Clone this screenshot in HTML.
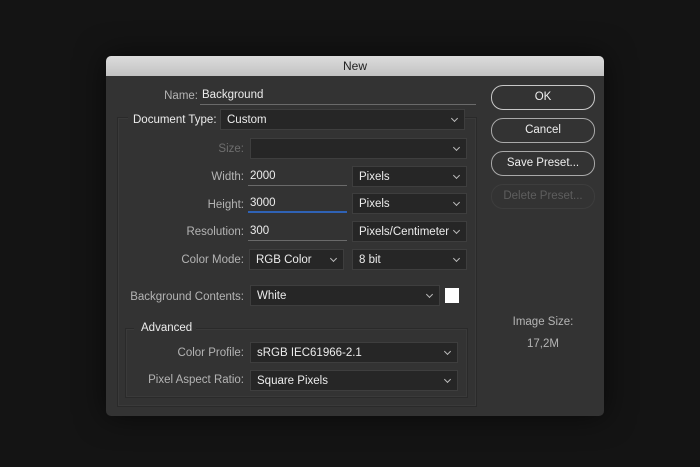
<!DOCTYPE html>
<html><head><style>
*{box-sizing:border-box;margin:0;padding:0}
body{width:700px;height:467px;background:#141414;font-family:"Liberation Sans",sans-serif;position:relative;overflow:hidden}
.dlg{position:absolute;left:106px;top:56px;width:498px;height:360px;background:#333333;border-radius:5px;overflow:hidden;box-shadow:0 0 30px rgba(0,0,0,.6)}
.tb{position:absolute;left:0;top:0;width:100%;height:20px;background:linear-gradient(#dcdcdc,#c2c2c2);color:#222;font-size:12px;text-align:center;line-height:20px}
.a{position:absolute}
.l{position:absolute;font-size:11.5px;color:#b4b4b4;text-align:right;white-space:nowrap}
.sel{position:absolute;height:21px;background:#262626;border:1px solid #3e3e3e;color:#ececec;font-size:11.5px;line-height:20px;padding-left:6px;white-space:nowrap}
.sel:after{content:"";position:absolute;right:7px;top:6px;width:4px;height:4px;border-right:1.2px solid #bbb;border-bottom:1.2px solid #bbb;transform:rotate(45deg)}
.inp{position:absolute;height:20px;border-bottom:1px solid #6a6a6a;color:#ececec;font-size:11.5px;line-height:21px;padding-left:2px}
.box{position:absolute;border:1px solid #2a2a2a;box-shadow:inset 0 0 0 1px #3a3a3a}
.btn{position:absolute;left:385px;width:104px;height:25px;border:1.5px solid #a9a9a9;border-radius:12px;color:#eee;font-size:11.5px;text-align:center;line-height:23px}
</style></head><body>
<div class="dlg">
<div class="tb">New</div>
<div class="box" style="left:11px;top:61px;width:360px;height:290px"></div>
<div class="box" style="left:19px;top:272px;width:343px;height:70px"></div>

<div class="l" style="right:406px;top:34px">Name:</div>
<div class="inp" style="left:94px;top:29px;width:276px">Background</div>

<div class="a" style="left:22px;top:54px;width:92px;height:18px;background:#333"></div>
<div class="l" style="left:27px;top:58px;color:#ececec">Document Type:</div>
<div class="sel" style="left:114px;top:53px;width:245px">Custom</div>

<div class="l" style="right:360px;top:87px;color:#6e6e6e">Size:</div>
<div class="sel" style="left:144px;top:82px;width:217px;color:#666"></div>

<div class="l" style="right:360px;top:115px">Width:</div>
<div class="inp" style="left:142px;top:110px;width:99px">2000</div>
<div class="sel" style="left:246px;top:110px;width:115px">Pixels</div>

<div class="l" style="right:360px;top:143px">Height:</div>
<div class="inp" style="left:142px;top:137px;width:99px;border-bottom:2px solid #2f62b5">3000</div>
<div class="sel" style="left:246px;top:137px;width:115px">Pixels</div>

<div class="l" style="right:360px;top:170px">Resolution:</div>
<div class="inp" style="left:142px;top:165px;width:99px">300</div>
<div class="sel" style="left:246px;top:165px;width:115px">Pixels/Centimeter</div>

<div class="l" style="right:360px;top:198px">Color Mode:</div>
<div class="sel" style="left:143px;top:193px;width:95px">RGB Color</div>
<div class="sel" style="left:246px;top:193px;width:115px">8 bit</div>

<div class="l" style="right:360px;top:235px">Background Contents:</div>
<div class="sel" style="left:144px;top:229px;width:190px">White</div>
<div class="a" style="left:339px;top:232px;width:14px;height:15px;background:#fff"></div>

<div class="a" style="left:28px;top:265px;width:62px;height:16px;background:#333"></div>
<div class="l" style="left:35px;top:266px;color:#ececec">Advanced</div>

<div class="l" style="right:360px;top:291px">Color Profile:</div>
<div class="sel" style="left:144px;top:286px;width:208px">sRGB IEC61966-2.1</div>
<div class="l" style="right:360px;top:318px">Pixel Aspect Ratio:</div>
<div class="sel" style="left:144px;top:314px;width:208px">Square Pixels</div>

<div class="btn" style="top:29px;border-color:#c8c8c8">OK</div>
<div class="btn" style="top:62px">Cancel</div>
<div class="btn" style="top:95px">Save Preset...</div>
<div class="btn" style="top:128px;border-color:#3d3d3d;color:#5e5e5e">Delete Preset...</div>

<div class="l" style="left:385px;width:104px;text-align:center;top:260px">Image Size:</div>
<div class="l" style="left:385px;width:104px;text-align:center;top:282px">17,2M</div>
</div>
</body></html>
